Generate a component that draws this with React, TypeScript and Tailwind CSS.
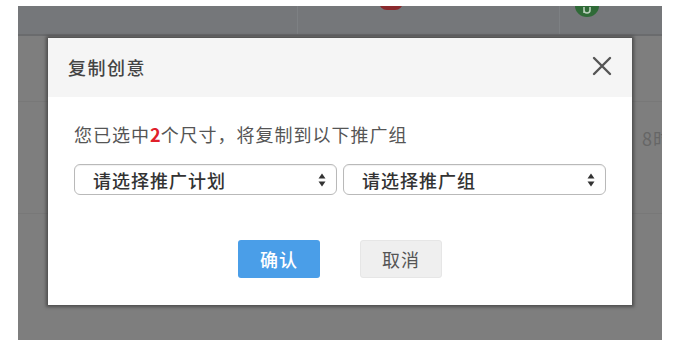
import React from "react";

const font = { fontFamily: '"Noto Sans CJK SC", "Noto Sans", sans-serif' };

const Arrows: React.FC = () => (
  <svg width="8" height="14" viewBox="0 0 8 14" className="shrink-0">
    <path d="M4 0.5 L7.5 5.5 L0.5 5.5 Z" fill="#333" />
    <path d="M4 13.5 L7.5 8.5 L0.5 8.5 Z" fill="#333" />
  </svg>
);

const FakeSelect: React.FC<{ label: string }> = ({ label }) => (
  <div className="flex-1 h-[31px] flex items-center justify-between pl-[18px] pr-[10px] border border-[#b9b9b9] rounded-[6px] bg-white shadow-[inset_0_1px_1px_rgba(0,0,0,0.06)]">
    <span className="text-[18px] tracking-[1px] text-[#333] font-medium leading-none">{label}</span>
    <Arrows />
  </div>
);

const App: React.FC = () => {
  return (
    <div className="w-[674px] h-[345px] bg-white pt-[6px] pl-[18px]" style={font}>
      {/* Page behind the overlay */}
      <div className="relative w-[644px] h-[334px] bg-[#7e7e7e] overflow-hidden">
        <div className="relative h-[30px] bg-[#75777a] border-b-2 border-[#6a6b6d] flex">
          <div className="w-[280px] border-r border-[#7d8083]" />
          <div className="w-[262px] border-r border-[#7d8083]" />
          <div className="absolute left-[361px] top-[-12px] w-[24px] h-[16px] rounded-full bg-[#8a2a2e]" />
          <svg className="absolute left-[557px] top-0" width="24" height="11" viewBox="0 0 24 11">
            <path d="M0 0 H24 A12 11 0 0 1 0 0 Z" fill="#2f6a37" />
            <path d="M9 1 V7 M9 4 A3 3 0 1 0 15 4 V1" stroke="#b9cfbb" strokeWidth="1.6" fill="none" />
          </svg>
        </div>
        <div className="h-[66px] border-b border-[#787878]" />
        <div className="h-[112px] border-b border-[#787878] flex items-center justify-end pb-[38px]">
          <span className="text-[18px] text-[#666] mr-[-10px] tracking-[1px]">8时</span>
        </div>

        {/* Dialog */}
        <div className="absolute left-[30px] top-[32px] w-[584px] h-[267px] bg-white flex flex-col shadow-[0_0_3px_2px_rgba(40,40,40,0.55)]">
          <div className="h-[59px] bg-[#f5f5f5] flex items-center justify-between pl-[20px] pr-[20px]">
            <span className="text-[18px] tracking-[1.5px] text-[#444] font-medium">复制创意</span>
            <svg width="20" height="20" viewBox="0 0 20 20" className="mt-[-4px]">
              <path d="M2 2 L18 18 M18 2 L2 18" stroke="#555" strokeWidth="2.4" strokeLinecap="round" />
            </svg>
          </div>
          <div className="px-[26px] pt-[24px]">
            <p className="text-[18px] tracking-[1px] text-[#555] leading-[26px]">
              您已选中<span className="text-[#e0202a] font-bold tracking-normal">2</span>个尺寸，将复制到以下推广组
            </p>
            <div className="flex gap-[6px] mt-[17px]">
              <FakeSelect label="请选择推广计划" />
              <FakeSelect label="请选择推广组" />
            </div>
          </div>
          <div className="flex justify-center gap-[40px] mt-[45px]">
            <button className="w-[82px] h-[38px] rounded-[3px] bg-[#4a9ee8] text-white text-[18px] tracking-[1px] font-medium">
              确认
            </button>
            <button className="w-[82px] h-[38px] rounded-[3px] bg-[#efefef] border border-[#e6e6e6] text-[#555] text-[18px] tracking-[1px]">
              取消
            </button>
          </div>
        </div>
      </div>
    </div>
  );
};

export default App;
